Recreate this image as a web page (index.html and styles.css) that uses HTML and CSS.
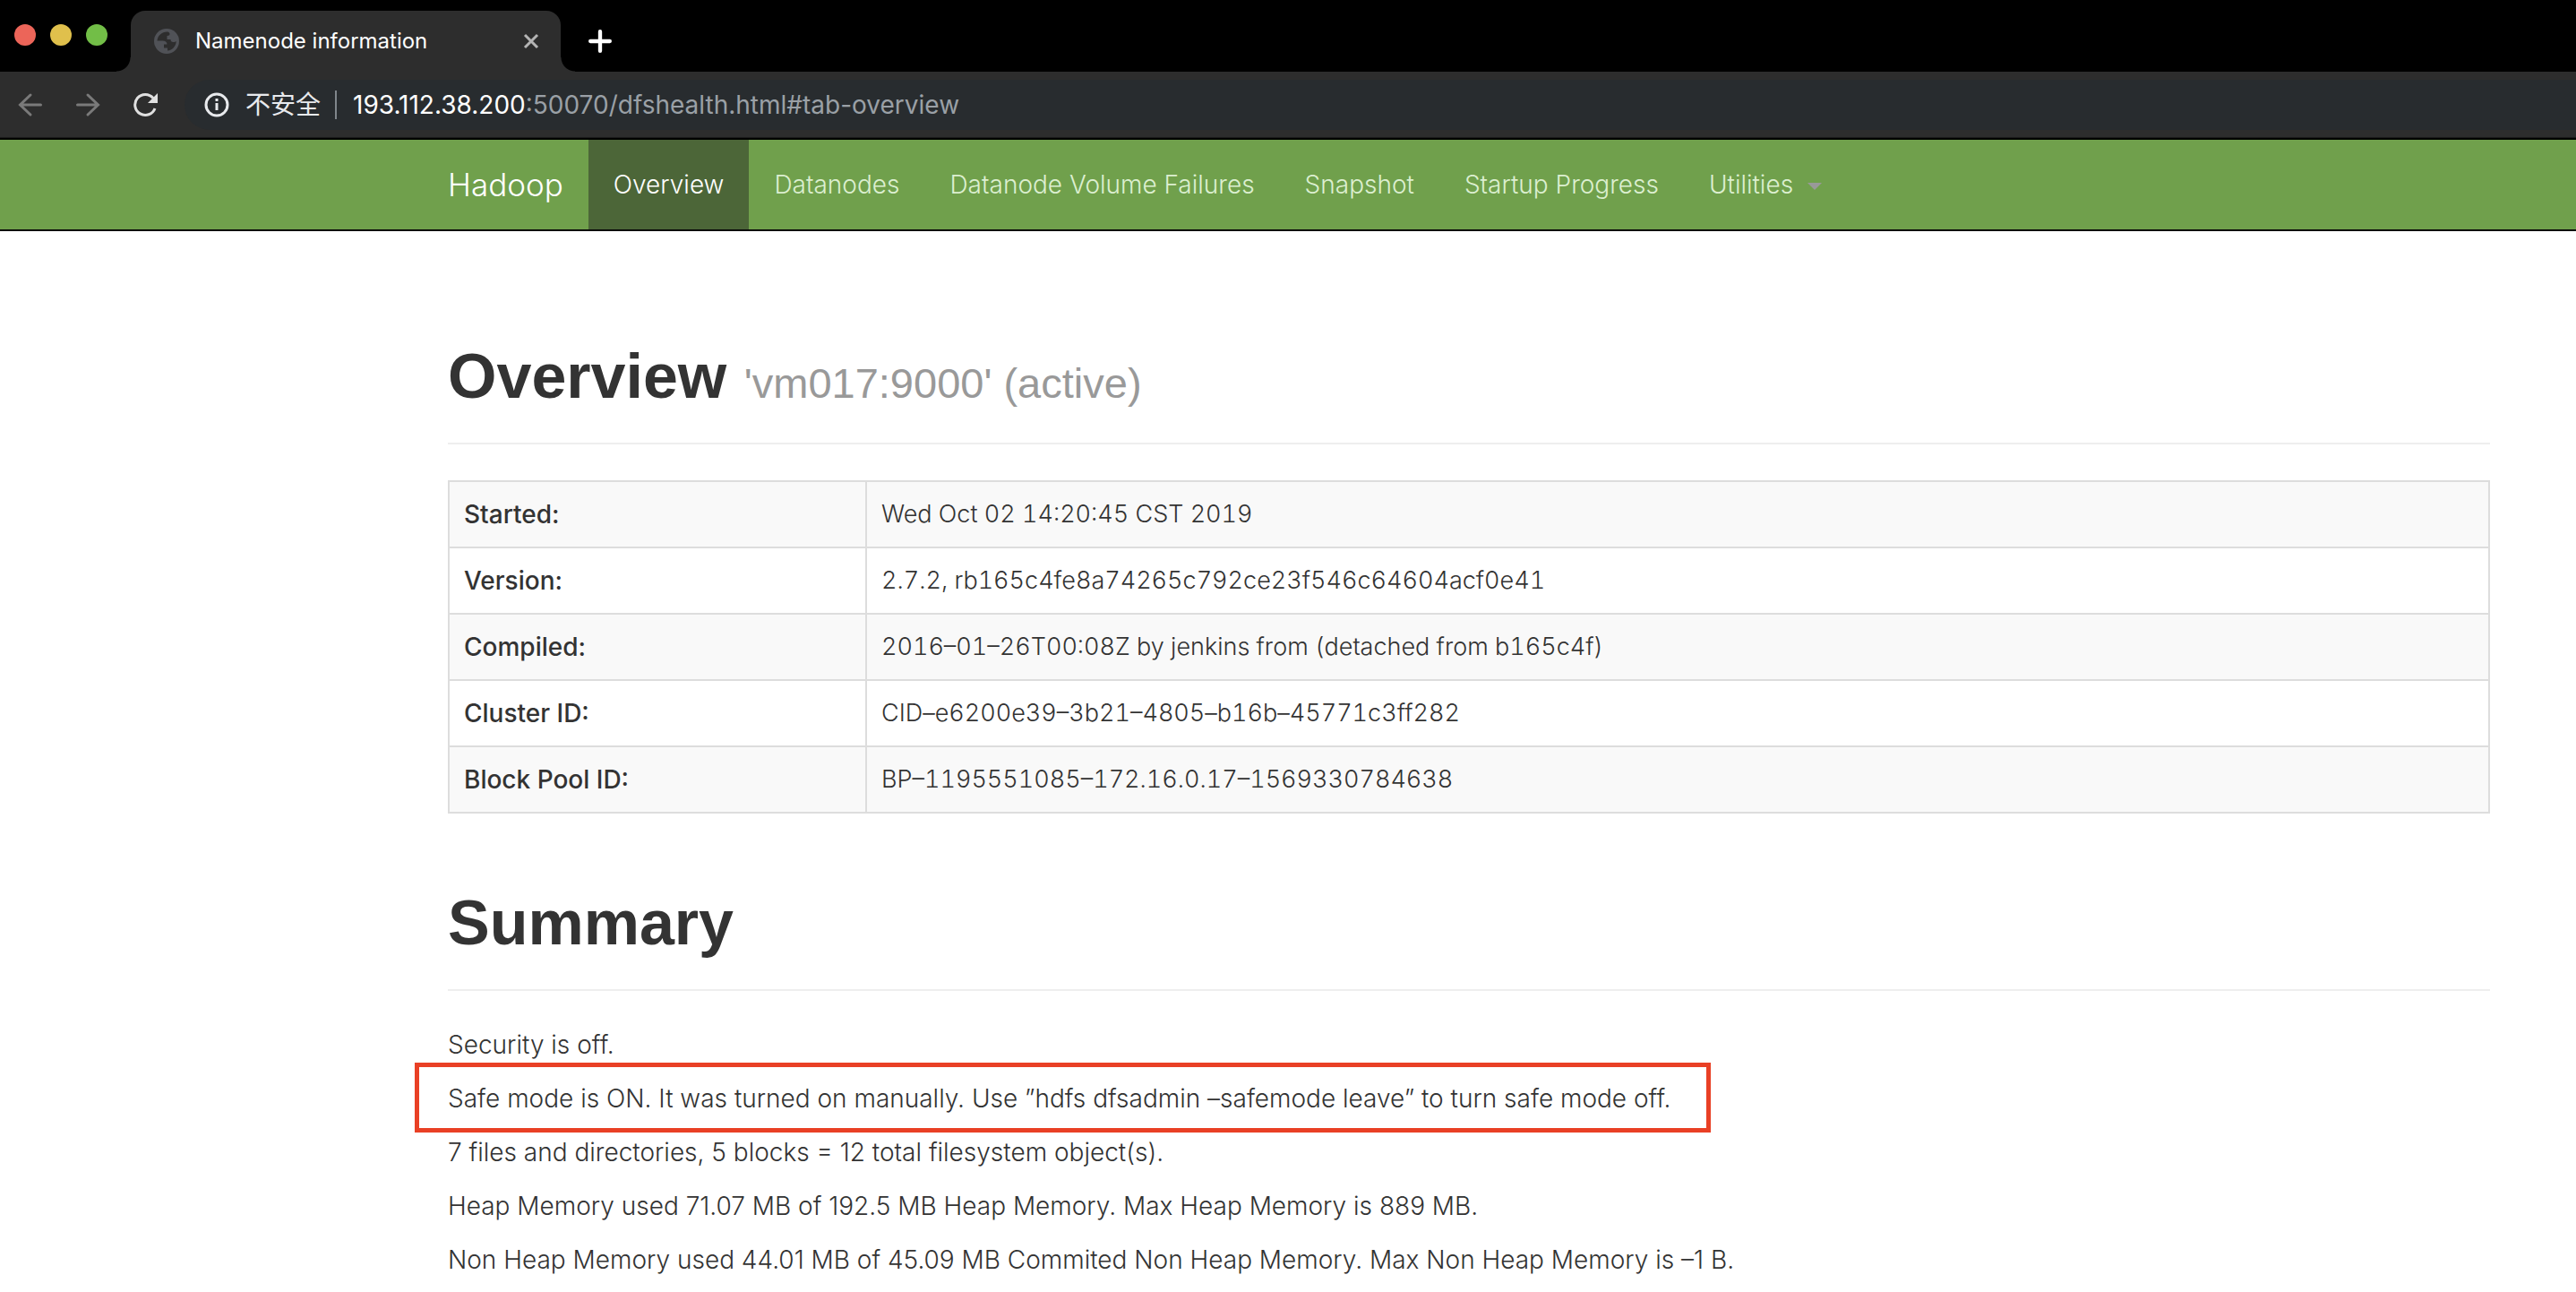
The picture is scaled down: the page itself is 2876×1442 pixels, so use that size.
FILE: index.html
```html
<!DOCTYPE html>
<html lang="en">
<head>
<meta charset="utf-8">
<title>Namenode information</title>
<link rel="stylesheet" href="styles.css">
</head>
<body>
<div class="browser">
  <div class="tab-strip">
    <div class="window-controls">
      <button class="light light-close" aria-label="Close window"></button>
      <button class="light light-min" aria-label="Minimize window"></button>
      <button class="light light-max" aria-label="Maximize window"></button>
    </div>
    <div class="tab">
      <svg class="tab-globe" viewBox="0 0 28 28" aria-hidden="true"><circle cx="14" cy="14" r="14" fill="#505257"/><path d="M15.500 3.500C9 3 4 7.500 3.500 13.500h6c3 0 5 1.500 5 4H11v4h4v3c5.500-.5 9.500-5 9.800-10.500-1 .8-2 1-3.300 1-2 0-3-1-3-3h-4V8c2 0 3-1 3-2 0-1-.8-2-2-2.500z" fill="#2d2d2d"/></svg>
      <span class="tab-title">Namenode information</span>
      <button class="tab-close" aria-label="Close tab"><svg viewBox="0 0 18 18"><path d="M2 2l14 14M16 2L2 16" stroke="#b4b4b4" stroke-width="3" fill="none"/></svg></button>
    </div>
    <button class="new-tab" aria-label="New tab"><svg viewBox="0 0 24 24"><path d="M12 2v20M2 12h20" stroke="#fff" stroke-width="4" stroke-linecap="round"/></svg></button>
  </div>
  <div class="toolbar">
    <div class="tools">
      <button class="tool" aria-label="Back"><svg viewBox="0 0 28 28"><path d="M25.500 14H3M14 3L2.500 14 14 25" stroke="#7a7a7a" stroke-width="3" stroke-linecap="round" fill="none"/></svg></button>
      <button class="tool" aria-label="Forward"><svg viewBox="0 0 28 28"><path d="M2.500 14H25M14 3l11.500 11L14 25" stroke="#7a7a7a" stroke-width="3" stroke-linecap="round" fill="none"/></svg></button>
      <button class="tool" aria-label="Reload"><svg viewBox="0 0 28 28"><path d="M23 6.500A11.500 11.500 0 1 0 25 18" stroke="#e0e0e0" stroke-width="3" fill="none"/><path d="M28 1v11H17z" fill="#e0e0e0"/></svg></button>
    </div>
    <div class="omnibox">
      <svg class="info" viewBox="0 0 28 28" aria-hidden="true"><circle cx="14" cy="14" r="12" stroke="#e8eaed" stroke-width="3" fill="none"/><path d="M14 12v8M14 7v3" stroke="#e8eaed" stroke-width="3"/></svg>
      <span class="insecure">不安全</span>
      <span class="url"><span class="host">193.112.38.200</span>:50070/dfshealth.html#tab-overview</span>
    </div>
  </div>
</div>
<nav class="navbar">
  <a class="brand" href="#">Hadoop</a>
  <a class="nav-link active" href="#tab-overview">Overview</a>
  <a class="nav-link" href="#tab-datanode">Datanodes</a>
  <a class="nav-link" href="#tab-datanode-volume-failures">Datanode Volume Failures</a>
  <a class="nav-link" href="#tab-snapshot">Snapshot</a>
  <a class="nav-link" href="#tab-startup-progress">Startup Progress</a>
  <a class="nav-link" href="#utilities">Utilities<span class="caret"></span></a>
</nav>
<main class="content">
  <h1 class="page-header">Overview <small>'vm017:9000' (active)</small></h1>
  <table class="facts">
    <tbody>
      <tr><th scope="row">Started:</th><td>Wed Oct 02 14:20:45 CST 2019</td></tr>
      <tr><th scope="row">Version:</th><td>2.7.2, rb165c4fe8a74265c792ce23f546c64604acf0e41</td></tr>
      <tr><th scope="row">Compiled:</th><td>2016–01–26T00:08Z by jenkins from (detached from b165c4f)</td></tr>
      <tr><th scope="row">Cluster ID:</th><td>CID–e6200e39–3b21–4805–b16b–45771c3ff282</td></tr>
      <tr><th scope="row">Block Pool ID:</th><td>BP–1195551085–172.16.0.17–1569330784638</td></tr>
    </tbody>
  </table>
  <h1 class="page-header">Summary</h1>
  <p>Security is off.</p>
  <p class="marked">Safe mode is ON. It was turned on manually. Use ”hdfs dfsadmin –safemode leave” to turn safe mode off.</p>
  <p>7 files and directories, 5 blocks = 12 total filesystem object(s).</p>
  <p>Heap Memory used 71.07 MB of 192.5 MB Heap Memory. Max Heap Memory is 889 MB.</p>
  <p>Non Heap Memory used 44.01 MB of 45.09 MB Commited Non Heap Memory. Max Non Heap Memory is –1 B.</p>
</main>
</body>
</html>
```
FILE: styles.css
```css
*, *::before, *::after { box-sizing: border-box; }
body {
  margin: 0;
  background: #fff;
  color: #333;
  font: 300 28px/40px Inter, "Liberation Sans", "Noto Sans CJK SC", sans-serif;
}
button { border: 0; padding: 0; background: none; }
svg { display: block; width: 100%; height: 100%; }

.browser { background: #2d2d2d; border-bottom: 2px solid #000; }
.tab-strip { display: flex; height: 80px; background: #000; }
.window-controls { display: flex; gap: 16px; width: 146px; padding: 27px 0 0 16px; }
.light { width: 24px; height: 24px; border-radius: 50%; }
.light-close { background: #ec6559; }
.light-min { background: #e0c04c; }
.light-max { background: #72be47; }
.tab {
  position: relative;
  display: flex;
  align-items: center;
  width: 480px;
  margin-top: 12px;
  padding: 0 24px 0 26px;
  border-radius: 16px 16px 0 0;
  background: #2d2d2d;
}
.tab::before, .tab::after {
  content: "";
  position: absolute;
  bottom: 0;
  width: 16px;
  height: 16px;
}
.tab::before { right: 100%; background: radial-gradient(circle at 0 0, #000 15px, #2d2d2d 16px); }
.tab::after { left: 100%; background: radial-gradient(circle at 100% 0, #000 15px, #2d2d2d 16px); }
.tab-globe { width: 28px; height: 28px; }
.tab-title { flex: 1; margin-left: 18px; color: #fff; font-size: 24px; font-weight: 400; }
.tab-close { width: 18px; height: 18px; }
.new-tab { width: 26px; height: 26px; margin: 33px 0 0 31px; }
.toolbar { display: flex; align-items: center; gap: 30px; height: 74px; padding-left: 20px; border-bottom: 1px solid #1c1c1c; }
.tools { display: flex; gap: 36px; }
.tool { width: 28px; height: 28px; }
.omnibox {
  display: flex;
  flex: 1;
  align-items: center;
  height: 56px;
  padding-left: 22px;
  border-radius: 28px 0 0 28px;
  background: #282c2f;
  color: #9aa0a6;
}
.info { width: 28px; height: 28px; }
.insecure { margin-left: 18px; padding-right: 16px; border-right: 2px solid #80868b; color: #e8eaed; line-height: 32px; font-weight: 400; }
.url { margin-left: 18px; font-weight: 400; }
.host { color: #fff; }

.navbar { display: flex; height: 102px; padding-left: 472px; background: #70a04c; border-bottom: 2px solid #0a0a0a; }
.navbar a { padding: 30px 28px; color: #dcefd0; text-decoration: none; white-space: nowrap; }
.navbar .brand { color: #fff; font-size: 35px; }
.navbar .active { background: #4c6638; color: #fff; }
.caret {
  display: inline-block;
  margin-left: 16px;
  vertical-align: middle;
  border: 8px solid transparent;
  border-top-color: #999;
  border-bottom: 0;
}

.content { padding: 122px 96px 0 500px; }
.page-header {
  margin: 0 0 40px;
  padding-bottom: 34px;
  border-bottom: 2px solid #eee;
  font-family: "Liberation Sans", sans-serif;
  font-size: 70px;
  font-weight: 700;
  line-height: 80px;
}
.page-header small { color: #999; font-size: 47px; font-weight: 400; line-height: 1; }
.facts { width: 100%; margin-bottom: 82px; border-collapse: collapse; table-layout: fixed; }
.facts th, .facts td { height: 74px; padding: 0 16px; border: 2px solid #ddd; text-align: left; }
.facts th { width: 466px; font-weight: 500; }
.facts td { font-size: 27px; font-variant-numeric: tabular-nums; }
.facts tr:nth-child(odd) { background: #f9f9f9; }
p { margin: 0 0 20px; }
.marked { position: relative; }
.marked::after {
  content: "";
  position: absolute;
  top: -20px;
  left: -37px;
  width: 1447px;
  height: 78px;
  border: 5px solid #e94025;
}
```
